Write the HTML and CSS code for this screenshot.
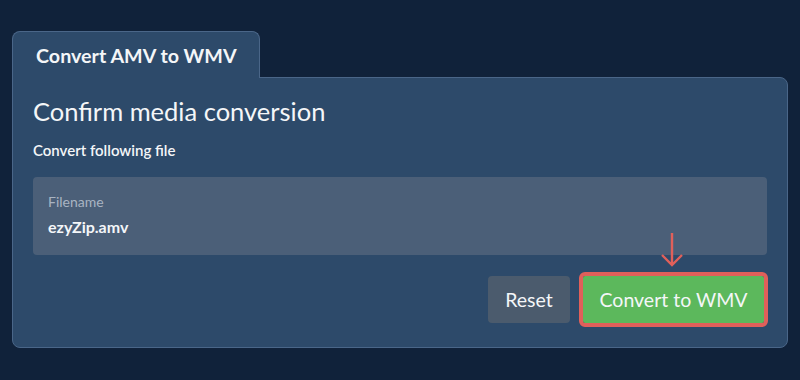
FILE: index.html
```html
<!DOCTYPE html>
<html lang="en">
<head>
  <meta charset="UTF-8" />
  <title>Convert AMV to WMV</title>
  <link rel="stylesheet" href="styles.css">
</head>
<body>
  <div class="wrap">
    <div class="tab">Convert AMV to WMV</div>
    <div class="panel">
      <h2>Confirm media conversion</h2>
      <div class="sub">Convert following file</div>

      <div class="file-box">
        <div class="label">Filename</div>
        <div class="name">ezyZip.amv</div>
      </div>

      <div class="actions">
        <button class="btn btn-reset">Reset</button>
        <div class="go">
          <svg class="arrow" width="24" height="36" viewBox="0 0 24 36">
            <path d="M12 1 V33 M2 23 L12 33 L22 23" fill="none" stroke="#e0605a" stroke-width="2.4" />
          </svg>
          <button class="btn btn-convert">Convert to WMV</button>
        </div>
      </div>
    </div>
  </div>
</body>
</html>
```

FILE: styles.css
```css
body {
  margin: 0;
  background-color: #10223a;
  font-family: Lato, "Open Sans", sans-serif;
  color: #f4f6f8;
}

.wrap {
  padding: 30px 0 0 12px;
  width: 776px;
}

.tab {
  display: inline-block;
  background-color: #2d4a6a;
  border: 1px solid #4a6688;
  border-bottom: none;
  border-radius: 8px 8px 0 0;
  padding: 12px 22px 0 23px;
  height: 34px;
  font-size: 19.7px;
  font-weight: bold;
  position: relative;
  top: 1px;
  z-index: 1;
}

.panel {
  background-color: #2d4a6a;
  border: 1px solid #4a6688;
  border-radius: 0 8px 8px 8px;
  padding: 16px 20px 24px 20px;
}

h2 {
  margin: 0;
  font-size: 25.5px;
  font-weight: normal;
  line-height: 34px;
}

.sub {
  font-size: 15px;
  font-weight: 600;
  margin-top: 13px;
}

.file-box {
  background-color: #4b5f78;
  border-radius: 4px;
  margin-top: 18px;
  height: 78px;
  padding: 0 15px;
  box-sizing: border-box;
  padding-top: 16px;
}

.label {
  font-size: 14px;
  color: #a9b4c2;
}

.name {
  font-size: 16px;
  font-weight: bold;
  margin-top: 7px;
}

.actions {
  display: flex;
  justify-content: flex-end;
  align-items: center;
  margin-top: 21px;
  gap: 13px;
}

.go {
  position: relative;
  margin-right: 3px;
}

.arrow {
  position: absolute;
  left: 77px;
  top: -44px;
}

.btn {
  font-family: Lato, "Open Sans", sans-serif;
  font-size: 19.5px;
  color: #f4f6f8;
  border: none;
  border-radius: 4px;
  height: 47px;
  cursor: pointer;
}

.btn-reset {
  background-color: #4b5b6d;
  width: 82px;
}

.btn-convert {
  background-color: #5cb85c;
  width: 181px;
  border-radius: 2px;
  outline: 4px solid #e0605a;
  display: block;
}
```
